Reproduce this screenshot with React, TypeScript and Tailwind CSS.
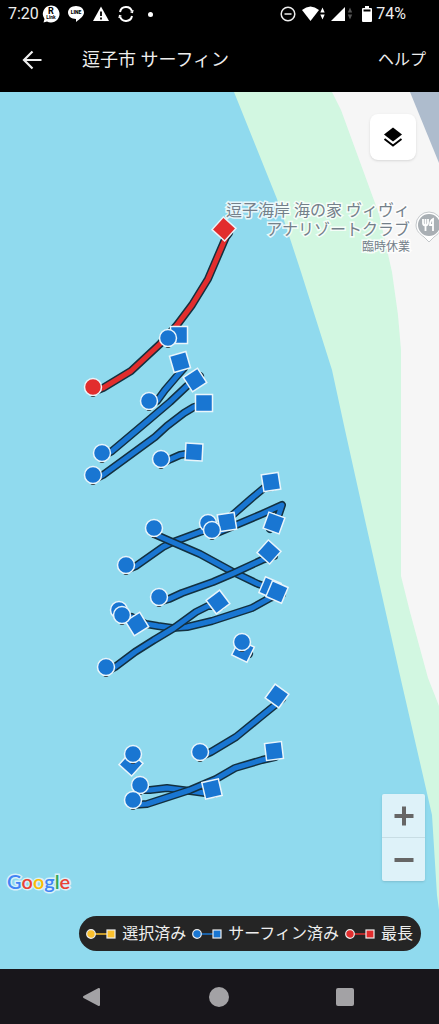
import * as React from "react";

type TrackKind = 'surfed' | 'longest' | 'selected';

interface Track {
  kind: TrackKind;
  path: string;
}

interface Marker {
  kind: TrackKind;
  shape: 'start' | 'end';
  x: number;
  y: number;
  angle?: number;
}

const colors: { [key in TrackKind]: string } = {
  surfed: '#1976d2',
  longest: '#e22d2d',
  selected: '#fbc02d',
};

const tracks: Track[] = [
  { kind: 'longest', path: 'M93 392 L103 388 L131 371 L160 344 L177 325 L192 305 L208 279 L226 237 L229 233' },
  { kind: 'surfed', path: 'M148 406 L157 401 L165 390 L177 376 L184 368' },
  { kind: 'surfed', path: 'M102 457 L112 451 L150 419 L170 402 L187 386 L200 376' },
  { kind: 'surfed', path: 'M93 480 L103 475 L155 437 L167 426 L184 413 L194 407 L204 404' },
  { kind: 'surfed', path: 'M161 464 L171 459 L180 455 L192 453' },
  { kind: 'surfed', path: 'M126 570 L136 566 L163 547 L173 542 L200 532 L220 526 L236 512 L252 498 L264 488 L272 487' },
  { kind: 'surfed', path: 'M154 534 L170 541 L200 554 L233 572 L258 584 L270 588' },
  { kind: 'surfed', path: 'M212 535 L236 525 L262 514 L282 505 L279 514 L270 529' },
  { kind: 'surfed', path: 'M159 602 L169 599 L182 593 L213 582 L234 573 L262 560 L274 556' },
  { kind: 'surfed', path: 'M132 617 L146 624 L158 626 L172 628 L187 627 L212 621 L252 608 L270 598 L282 594' },
  { kind: 'surfed', path: 'M106 672 L115 667 L135 652 L154 640 L174 628 L196 612 L208 606 L221 606' },
  { kind: 'surfed', path: 'M200 757 L211 752 L236 737 L258 719 L274 706 L282 699' },
  { kind: 'surfed', path: 'M140 790 L150 790 L167 788 L190 791 L205 793 L213 794' },
  { kind: 'surfed', path: 'M132 805 L147 804 L190 790 L216 779 L235 768 L262 760 L275 757' },
  { kind: 'surfed', path: 'M168 343 L179 337' },
  { kind: 'surfed', path: 'M242 650 L249 654' },
];

const markers: Marker[] = [
  { kind: 'longest', shape: 'end', x: 224, y: 229, angle: 42 },
  { kind: 'longest', shape: 'start', x: 93, y: 387 },
  { kind: 'surfed', shape: 'end', x: 179, y: 335 },
  { kind: 'surfed', shape: 'start', x: 168, y: 338 },
  { kind: 'surfed', shape: 'end', x: 180, y: 362, angle: -16 },
  { kind: 'surfed', shape: 'start', x: 149, y: 401 },
  { kind: 'surfed', shape: 'end', x: 195, y: 380, angle: -33 },
  { kind: 'surfed', shape: 'end', x: 204, y: 403 },
  { kind: 'surfed', shape: 'start', x: 102, y: 453 },
  { kind: 'surfed', shape: 'start', x: 93, y: 475 },
  { kind: 'surfed', shape: 'start', x: 161, y: 459 },
  { kind: 'surfed', shape: 'end', x: 194, y: 452, angle: 3 },
  { kind: 'surfed', shape: 'end', x: 271, y: 482, angle: -9 },
  { kind: 'surfed', shape: 'end', x: 274, y: 523, angle: 20 },
  { kind: 'surfed', shape: 'start', x: 208, y: 523 },
  { kind: 'surfed', shape: 'end', x: 227, y: 522, angle: -9 },
  { kind: 'surfed', shape: 'start', x: 212, y: 530 },
  { kind: 'surfed', shape: 'start', x: 154, y: 528 },
  { kind: 'surfed', shape: 'start', x: 126, y: 565 },
  { kind: 'surfed', shape: 'end', x: 269, y: 552, angle: 42 },
  { kind: 'surfed', shape: 'end', x: 270, y: 588, angle: 23 },
  { kind: 'surfed', shape: 'end', x: 277, y: 592, angle: 23 },
  { kind: 'surfed', shape: 'start', x: 159, y: 597 },
  { kind: 'surfed', shape: 'start', x: 119, y: 610 },
  { kind: 'surfed', shape: 'end', x: 137, y: 624, angle: -32 },
  { kind: 'surfed', shape: 'start', x: 122, y: 615 },
  { kind: 'surfed', shape: 'end', x: 218, y: 602, angle: -37 },
  { kind: 'surfed', shape: 'end', x: 243, y: 651, angle: 26 },
  { kind: 'surfed', shape: 'start', x: 242, y: 642 },
  { kind: 'surfed', shape: 'start', x: 106, y: 667 },
  { kind: 'surfed', shape: 'end', x: 277, y: 696, angle: 36 },
  { kind: 'surfed', shape: 'start', x: 200, y: 752 },
  { kind: 'surfed', shape: 'end', x: 274, y: 751, angle: -7 },
  { kind: 'surfed', shape: 'end', x: 131, y: 764, angle: 42 },
  { kind: 'surfed', shape: 'start', x: 133, y: 754 },
  { kind: 'surfed', shape: 'end', x: 212, y: 789, angle: -13 },
  { kind: 'surfed', shape: 'start', x: 140, y: 785 },
  { kind: 'surfed', shape: 'start', x: 133, y: 800 },
];

const legend: { kind: TrackKind; label: string }[] = [
  { kind: 'selected', label: '選択済み' },
  { kind: 'surfed', label: 'サーフィン済み' },
  { kind: 'longest', label: '最長' },
];

function StatusBar() {
  return (
    <div className="flex h-7 items-center justify-between pl-2 pr-[33px] text-base text-[#eeeeee]">
      <div className="flex items-center gap-[3px]">
        <span>7:20</span>
        <div className="flex items-center gap-[7px]">
          <svg className="h-[18px] w-[18px]" viewBox="0 0 18 18">
            <path d="M9 0.500a8.500 8.500 0 1 1-4 16l-3.500 1 1-3.500A8.500 8.500 0 0 1 9 0.500Z" fill="#fff" />
            <text x="9" y="9" textAnchor="middle" fontSize="9" fontWeight="700" fill="#000">R</text>
            <text x="9" y="14" textAnchor="middle" fontSize="5" fontWeight="700" fill="#000">Link</text>
          </svg>
          <svg className="h-[18px] w-[18px]" viewBox="0 0 18 18">
            <path d="M9 1c4.500 0 8 2.800 8 6.500 0 3.500-4 6.500-8 9.500v-3c-4.500 0-8-2.800-8-6.500S4.500 1 9 1Z" fill="#fff" />
            <text x="9" y="9" textAnchor="middle" fontSize="5" fontWeight="900" fill="#000">LINE</text>
          </svg>
          <svg className="h-[18px] w-[18px]" viewBox="0 0 18 18">
            <path d="M9 1.500 17 16H1Z" fill="#fff" />
            <path d="M9 6.500v4.500M9 12.500v2" stroke="#000" strokeWidth="1.800" />
          </svg>
          <svg className="h-[18px] w-[18px]" viewBox="0 0 18 18" fill="none" stroke="#fff" strokeWidth="2">
            <path d="M3 7a6.200 6.200 0 0 1 12-0.500M15 11a6.200 6.200 0 0 1-12 0.500" />
            <path d="m16 5-0.500 2.500-2-0.500M2 13l0.500-2.500 2 0.500" strokeWidth="1.200" />
          </svg>
          <span className="ml-[6px] h-[5px] w-[5px] rounded-full bg-white" />
        </div>
      </div>
      <div className="flex items-center gap-1">
        <svg className="mr-[2px] h-4 w-4" viewBox="0 0 16 16" fill="none" stroke="#eee" strokeWidth="1.500">
          <circle cx="8" cy="8" r="6.800" />
          <path d="M4.500 8h7" />
        </svg>
        <svg className="h-4 w-6" viewBox="0 0 24 16" fill="#fff">
          <path d="M0 4q8.500-7 17 0L8.500 15Z" />
          <path d="m20.500 1.500 2.200 5h-4.400ZM20.500 13.500l2.200-5h-4.400Z" />
        </svg>
        <svg className="h-4 w-6" viewBox="0 0 24 16" fill="#fff">
          <path d="M15 1v14H1Z" />
          <path d="m20 1.500 2.200 5h-4.400ZM20 13.500l2.200-5h-4.400Z" fill="#555" />
        </svg>
        <svg className="ml-1 h-4 w-[10px]" viewBox="0 0 10 16">
          <path d="M3 0h4v2h2a1 1 0 0 1 1 1v12a1 1 0 0 1-1 1H1a1 1 0 0 1-1-1V3a1 1 0 0 1 1-1h2Z" fill="#fff" />
          <path d="M1.500 3.500h7v2h-7Z" fill="#000" />
        </svg>
        <span>74%</span>
      </div>
    </div>
  );
}

function TrackMap() {
  return (
    <svg
      className="absolute inset-0 h-full w-full"
      viewBox="0 92 439 877"
      preserveAspectRatio="xMidYMid slice"
    >
      <rect x="0" y="92" width="439" height="877" fill="#90daee" />
      {/* beach */}
      <path
        d="M234 92 L277 199 L301 272 L332 370 L345 430 L365 520 L401 680 L424 780 L432 815 L437 895 L439 910 L439 92Z"
        fill="#d2f7e1"
      />
      {/* land */}
      <path
        d="M332 92 L341 110 L379 214 L392 272 L398 315 L401 350 L401 576 L410 612 L428 678 L439 706 L439 92Z"
        fill="#f6f6f6"
      />
      <path d="M410 92 L439 163 L439 92Z" fill="#aebccd" />
      {tracks.map((track) => (
        <g key={track.path} fill="none" strokeLinecap="round" strokeLinejoin="round">
          <path d={track.path} stroke="#13303f" strokeWidth="8" />
          <path d={track.path} stroke={colors[track.kind]} strokeWidth="5" />
        </g>
      ))}
      {markers.map((marker) => {
        const key = `${marker.shape}-${marker.x}-${marker.y}`;
        if (marker.shape === 'start') {
          return (
            <g key={key}>
              <circle cx={marker.x} cy={marker.y + 7} r="3" fill="#111" />
              <circle cx={marker.x} cy={marker.y} r="8.500" fill={colors[marker.kind]} stroke="#e9f5fb" strokeWidth="1.500" />
            </g>
          );
        }
        return (
          <rect
            key={key}
            x={marker.x - 8.5}
            y={marker.y - 8.5}
            width="17"
            height="17"
            transform={`rotate(${marker.angle || 0} ${marker.x} ${marker.y})`}
            fill={colors[marker.kind]}
            stroke="#e9f5fb"
            strokeWidth="1.500"
          />
        );
      })}
    </svg>
  );
}

function PlaceLabel() {
  return (
    <div className="absolute -right-1 top-[109px] flex items-start gap-[5px]">
      <div className="text-right text-base leading-[19px] text-[#74808a] [paint-order:stroke_fill] [-webkit-text-stroke:3px_#ffffffcc]">
        <p>逗子海岸 海の家 ヴィヴィ</p>
        <p>アナリゾートクラブ</p>
        <p className="text-xs leading-4">臨時休業</p>
      </div>
      <svg className="mt-[10px] h-[34px] w-7" viewBox="0 0 28 34">
        <path d="M14 1a13 13 0 0 1 13 13c0 6-4 9-8 12l-5 5-5-5c-4-3-8-6-8-12A13 13 0 0 1 14 1Z" fill="#fff" stroke="#c4c8cb" />
        <circle cx="14" cy="14" r="11" fill="#a9afb4" />
        <path d="M8 8v4a2.500 2.500 0 0 0 5 0V8M10.500 8v12M18 20V8c-2 1-3 3-3 6h3" fill="none" stroke="#fff" strokeWidth="1.800" />
      </svg>
    </div>
  );
}

function Legend() {
  return (
    <div className="absolute bottom-[18px] right-[18px] flex h-[35px] items-center gap-[6px] rounded-full bg-[#252525] pl-[7px] pr-2 text-base text-[#eeeeee]">
      {legend.map((item) => (
        <div key={item.kind} className="flex items-center gap-[6px]">
          <svg className="h-3 w-[30px]" viewBox="0 0 30 12">
            <path d="M5 6h20" stroke={colors[item.kind]} strokeWidth="1.500" />
            <circle cx="5" cy="6" r="4.300" fill={colors[item.kind]} stroke="#eee" strokeWidth="1.200" />
            <rect x="21" y="2" width="8" height="8" fill={colors[item.kind]} stroke="#eee" strokeWidth="1.200" />
          </svg>
          <span className="whitespace-nowrap">{item.label}</span>
        </div>
      ))}
    </div>
  );
}

function App() {
  return (
    <div className="flex min-h-screen flex-col bg-black font-[Roboto,'Noto_Sans_CJK_JP',sans-serif]">
      <StatusBar />

      <header className="flex h-16 items-center pl-5 pr-[13px] text-[#eeeeee]">
        <button aria-label="戻る" className="mr-[38px]">
          <svg className="h-6 w-6" viewBox="0 0 24 24" fill="none" stroke="currentColor" strokeWidth="2.200">
            <path d="M21.500 12H4M12.500 3.500 4 12l8.500 8.500" />
          </svg>
        </button>
        <h1 className="flex-1 text-lg">逗子市 サーフィン</h1>
        <button className="text-base">ヘルプ</button>
      </header>

      <main className="relative flex-1 overflow-hidden">
        <TrackMap />
        <PlaceLabel />

        <button
          aria-label="レイヤー"
          className="absolute right-[23px] top-[22px] flex h-[46px] w-[46px] items-center justify-center rounded-lg bg-white shadow"
        >
          <svg className="h-6 w-6" viewBox="0 0 24 24">
            <path d="M12 2.500 21 9.500 12 16.500 3 9.500Z" fill="#000" />
            <path d="m3.500 14 8.500 6.500 8.500-6.500" fill="none" stroke="#000" strokeWidth="1.900" />
          </svg>
        </button>

        <div className="absolute bottom-[88px] right-[14px] flex w-[43px] flex-col divide-y divide-[#c8dde4] rounded-xs bg-[#def2f9] shadow">
          <button aria-label="拡大" className="flex h-11 items-center justify-center">
            <svg className="h-5 w-5" viewBox="0 0 20 20" stroke="#666" strokeWidth="4">
              <path d="M0.500 10h19M10 0.500v19" />
            </svg>
          </button>
          <button aria-label="縮小" className="flex h-[43px] items-center justify-center">
            <svg className="h-5 w-5" viewBox="0 0 20 20" stroke="#666" strokeWidth="4">
              <path d="M0.500 10h19" />
            </svg>
          </button>
        </div>

        <p className="absolute bottom-[74px] left-[7px] font-[Lato,sans-serif] text-xl leading-7 font-semibold [paint-order:stroke_fill] [-webkit-text-stroke:3px_#d8f0f9]">
          <span className="text-[#4285f4]">G</span>
          <span className="text-[#ea4335]">o</span>
          <span className="text-[#fbbc05]">o</span>
          <span className="text-[#4285f4]">g</span>
          <span className="text-[#34a853]">l</span>
          <span className="text-[#ea4335]">e</span>
        </p>

        <Legend />
      </main>

      <nav className="flex h-[55px] items-center justify-around bg-[#18161b] pl-7 pr-8 text-[#a3a2a5]">
        <button aria-label="戻る">
          <svg className="h-5 w-5" viewBox="0 0 20 20" fill="currentColor" stroke="currentColor" strokeWidth="2" strokeLinejoin="round">
            <path d="M17 2v16L2 10Z" />
          </svg>
        </button>
        <button aria-label="ホーム" className="h-5 w-5 rounded-full bg-[#a3a2a5]" />
        <button aria-label="最近のアプリ" className="h-[18px] w-[18px] rounded-xs bg-[#a3a2a5]" />
      </nav>
    </div>
  );
}

export default App;
